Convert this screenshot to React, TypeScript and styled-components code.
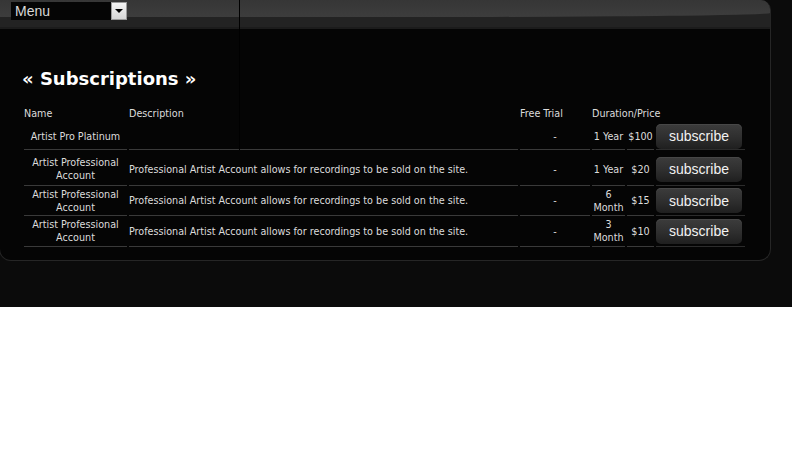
import React from "react";
import styled, { createGlobalStyle } from "styled-components";

const GlobalStyle = createGlobalStyle`
  html, body { margin: 0; padding: 0; background: #ffffff; }
  body { font-family: "DejaVu Sans", "Liberation Sans", sans-serif; }
`;

const Outer = styled.div`
  position: relative;
  width: 792px;
  height: 307px;
  background: #0b0b0b;
  overflow: hidden;
`;

const Panel = styled.div`
  width: 770px;
  margin-left: -1px;
  background: #050505;
  border: 1px solid #262626;
  border-top: none;
  border-radius: 0 10px 12px 12px;
  padding-bottom: 13px;
`;

const Header = styled.div`
  position: relative;
  height: 29px;
  background: #232323;
  border-top-right-radius: 9px;
  overflow: hidden;
  &::before {
    content: "";
    position: absolute;
    left: 0;
    top: 0;
    right: 0;
    height: 17px;
    background: linear-gradient(#363636, #3d3d3d);
    border-bottom-right-radius: 45% 4px;
    border-top-right-radius: 9px;
  }
  &::after {
    content: "";
    position: absolute;
    left: 0;
    right: 0;
    bottom: 0;
    height: 2px;
    background: #1c1c1c;
  }
`;

const MenuSelect = styled.div`
  position: absolute;
  z-index: 1;
  left: 11px;
  top: 2px;
  width: 116px;
  height: 18px;
  display: flex;
  align-items: stretch;
  background: #050505;
  box-sizing: border-box;
`;

const MenuLabel = styled.span`
  flex: 1;
  padding-left: 4px;
  font-family: "Liberation Sans", Arial, sans-serif;
  font-size: 14px;
  line-height: 18px;
  color: #d8d8d8;
`;

const MenuArrow = styled.span`
  width: 16px;
  background: linear-gradient(#f4f4f4, #d6d6d6);
  border: 1px solid #9a9a9a;
  box-sizing: border-box;
  display: flex;
  align-items: center;
  justify-content: center;
  &::before {
    content: "";
    border-left: 4px solid transparent;
    border-right: 4px solid transparent;
    border-top: 4px solid #000;
  }
`;

const DividerLine = styled.div`
  position: absolute;
  left: 239px;
  top: 0;
  width: 1px;
  height: 150px;
  background: #000;
  z-index: 2;
`;

const Content = styled.div`
  padding: 38px 0 0 22px;
`;

const Title = styled.h2`
  margin: 0 0 12px 0;
  font-family: "DejaVu Sans", Verdana, sans-serif;
  font-weight: bold;
  font-size: 18px;
  line-height: 24px;
  color: #ffffff;
`;

const Table = styled.table`
  table-layout: fixed;
  width: 725px;
  border-collapse: separate;
  border-spacing: 2px 0;
  font-family: "DejaVu Sans", Tahoma, sans-serif;
  font-stretch: condensed;
  font-size: 10.7px;
  color: #dcdcdc;
`;

const HeadCell = styled.th`
  text-align: left;
  font-weight: normal;
  padding: 0;
  height: 20px;
  vertical-align: middle;
  white-space: nowrap;
`;

const Row = styled.tr<{ $h: number; $pt: number }>`
  height: ${(p) => p.$h}px;
  & > td {
    padding-top: ${(p) => p.$pt}px;
  }
`;

const Cell = styled.td<{ $align?: string }>`
  padding: 0;
  text-align: ${(p) => p.$align || "center"};
  vertical-align: middle;
  border-bottom: 1px solid #3a3a3a;
  line-height: 13px;
  box-sizing: border-box;
  white-space: nowrap;
`;

const WrapCell = styled(Cell)`
  white-space: normal;
`;

const BtnCell = styled(Cell)`
  border-bottom-color: #2c2c2c;
`;

const SubscribeButton = styled.button`
  width: 86px;
  height: 25px;
  padding: 0;
  border: none;
  border-radius: 5px;
  background: linear-gradient(#3c3c3c 0%, #2e2e2e 55%, #1f1f1f 100%);
  box-shadow: inset 0 1px 0 #474747;
  color: #f2f2f2;
  font-family: "Liberation Sans", Arial, sans-serif;
  font-size: 14px;
  display: block;
  cursor: pointer;
`;

type Sub = {
  name: React.ReactNode;
  desc: string;
  trial: string;
  duration: React.ReactNode;
  price: string;
  h: number;
  pt: number;
};

const desc = "Professional Artist Account allows for recordings to be sold on the site.";

const subs: Sub[] = [
  { name: "Artist Pro Platinum", desc: "", trial: "-", duration: "1 Year", price: "$100", h: 27, pt: 0 },
  { name: <>Artist Professional<br />Account</>, desc, trial: "-", duration: "1 Year", price: "$20", h: 36, pt: 3 },
  { name: <>Artist Professional<br />Account</>, desc, trial: "-", duration: <>6<br />Month</>, price: "$15", h: 30, pt: 0 },
  { name: <>Artist Professional<br />Account</>, desc, trial: "-", duration: <>3<br />Month</>, price: "$10", h: 31, pt: 0 },
];

const colWidths = [103, 389, 70, 33, 27, 89];

export default function App() {
  return (
    <>
      <GlobalStyle />
      <Outer>
        <DividerLine />
        <Panel>
          <Header>
            <MenuSelect>
              <MenuLabel>Menu</MenuLabel>
              <MenuArrow />
            </MenuSelect>
          </Header>
          <Content>
            <Title>« Subscriptions »</Title>
            <Table>
              <colgroup>
                {colWidths.map((w, i) => (
                  <col key={i} style={{ width: w }} />
                ))}
              </colgroup>
              <thead>
                <tr>
                  <HeadCell>Name</HeadCell>
                  <HeadCell>Description</HeadCell>
                  <HeadCell>Free Trial</HeadCell>
                  <HeadCell colSpan={2}>Duration/Price</HeadCell>
                  <HeadCell></HeadCell>
                </tr>
              </thead>
              <tbody>
                {subs.map((s, i) => (
                  <Row key={i} $h={s.h} $pt={s.pt}>
                    <WrapCell>{s.name}</WrapCell>
                    <Cell $align="left">{s.desc}</Cell>
                    <Cell>{s.trial}</Cell>
                    <WrapCell>{s.duration}</WrapCell>
                    <Cell>{s.price}</Cell>
                    <BtnCell>
                      <SubscribeButton>subscribe</SubscribeButton>
                    </BtnCell>
                  </Row>
                ))}
              </tbody>
            </Table>
          </Content>
        </Panel>
      </Outer>
    </>
  );
}
